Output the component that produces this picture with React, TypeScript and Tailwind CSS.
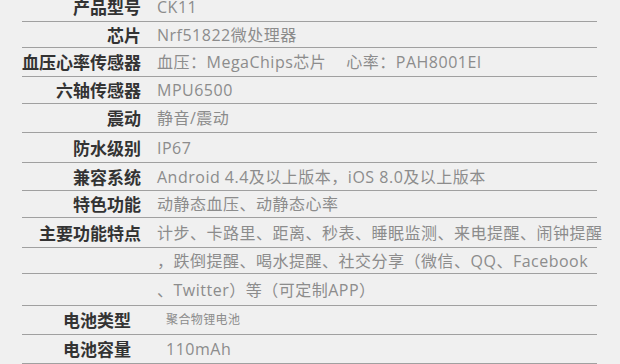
import React from 'react';

type Row = {
  label?: string;
  value: React.ReactNode;
  h: string;
  battery?: boolean;
  small?: boolean;
};

const rows: Row[] = [
  { label: '产品型号', value: 'CK11', h: 'h-[29px]' },
  { label: '芯片', value: 'Nrf51822微处理器', h: 'h-[26px]' },
  {
    label: '血压心率传感器',
    value: (
      <>
        <span>血压：MegaChips芯片</span>
        <span className="ml-[20px]">心率：PAH8001EI</span>
      </>
    ),
    h: 'h-[29px]',
  },
  { label: '六轴传感器', value: 'MPU6500', h: 'h-[27px]' },
  { label: '震动', value: '静音/震动', h: 'h-[29px]' },
  { label: '防水级别', value: 'IP67', h: 'h-[30px]' },
  { label: '兼容系统', value: 'Android 4.4及以上版本，iOS 8.0及以上版本', h: 'h-[28px]' },
  { label: '特色功能', value: '动静态血压、动静态心率', h: 'h-[27px]' },
  { label: '主要功能特点', value: '计步、卡路里、距离、秒表、睡眠监测、来电提醒、闹钟提醒', h: 'h-[30px]' },
  { value: '，跌倒提醒、喝水提醒、社交分享（微信、QQ、Facebook', h: 'h-[26px]' },
  { value: '、Twitter）等（可定制APP）', h: 'h-[32px]' },
  { label: '电池类型', value: '聚合物锂电池', h: 'h-[29px]', battery: true, small: true },
  { label: '电池容量', value: '110mAh', h: 'h-[29px]', battery: true },
];

const labelFont = "font-['Noto_Sans_CJK_SC','Noto_Sans',sans-serif]";
const valueFont = "font-['Open_Sans','Noto_Sans_CJK_SC',sans-serif]";

export default function App() {
  return (
    <div className="w-[620px] h-[364px] overflow-hidden bg-[#f0f0f0]">
      <div className="-mt-[7px]">
        {rows.map((row, i) => (
          <div
            key={i}
            className={`${row.h} ml-[22px] w-[575px] flex items-center border-b border-[#a0a0a0] whitespace-nowrap`}
          >
            {row.battery ? (
              <div className={`w-[144px] shrink-0 pl-[41px] text-[17px] font-bold text-[#333] ${labelFont}`}>
                {row.label}
              </div>
            ) : (
              <div className={`w-[119px] shrink-0 flex justify-end text-[17px] font-bold text-[#333] ${labelFont}`}>
                {row.label}
              </div>
            )}
            <div
              className={`${row.battery ? '' : 'ml-[16px]'} shrink-0 text-[#8c8c8c] ${valueFont} ${
                row.small ? 'text-[12px] tracking-[0.4px]' : 'text-[16px] tracking-[0.5px]'
              }`}
            >
              {row.value}
            </div>
          </div>
        ))}
      </div>
    </div>
  );
}
